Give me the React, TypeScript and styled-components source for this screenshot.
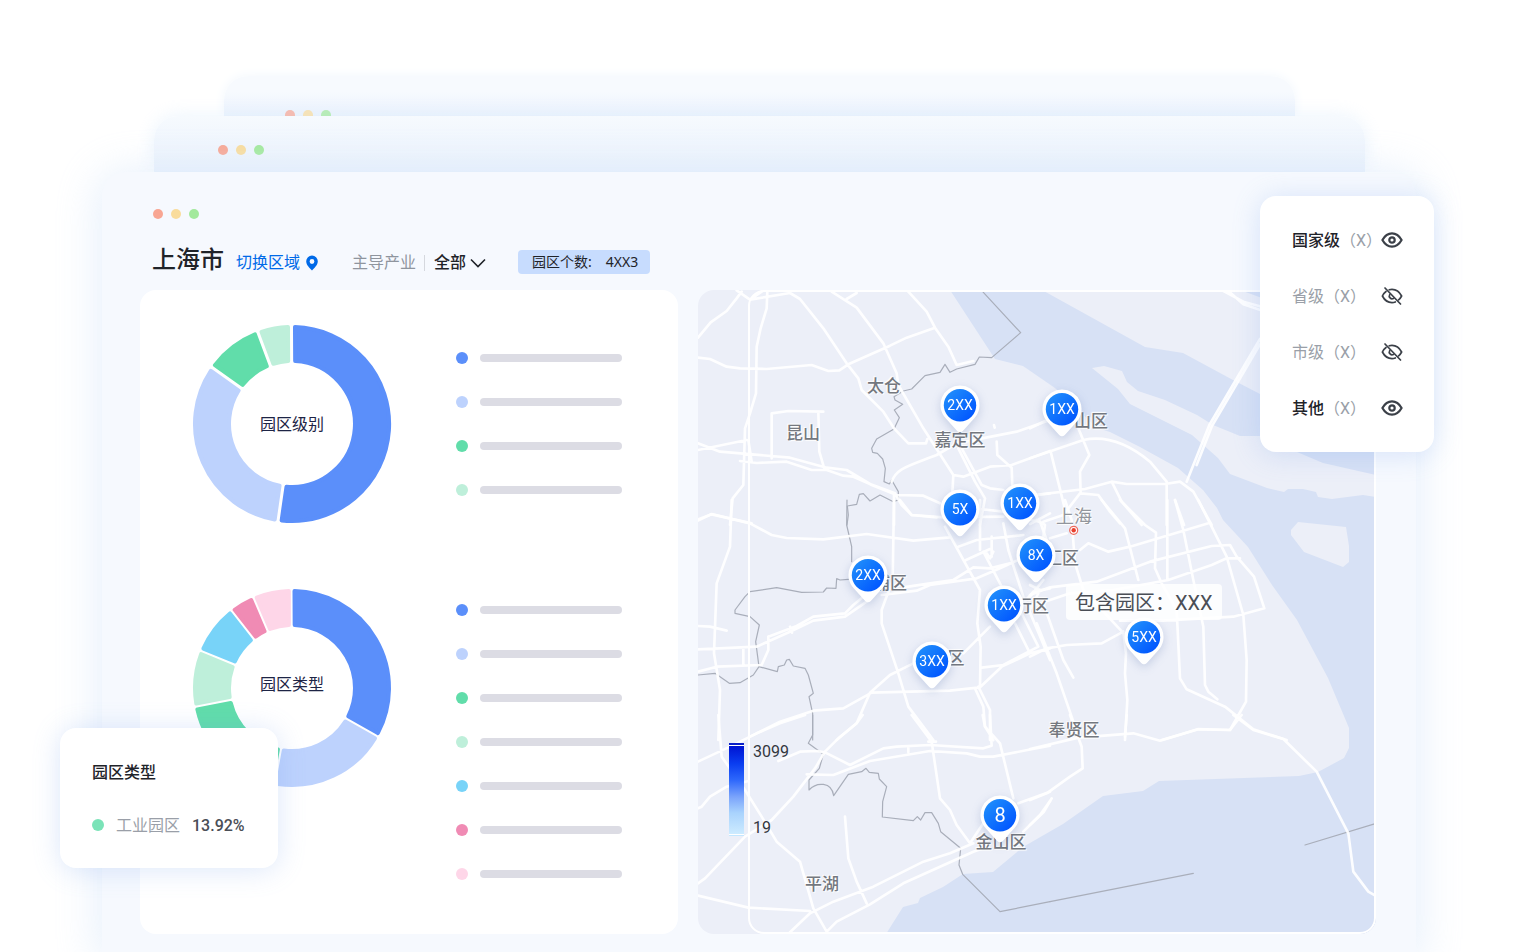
import React, { useState } from "react";
import styled, { createGlobalStyle } from "styled-components";

const GlobalStyle = createGlobalStyle`
  *, *::before, *::after { box-sizing: border-box; }
  body {
    margin: 0;
    background: #fff;
    color: #1f2329;
    font-family: Roboto, "Noto Sans CJK SC", sans-serif;
    font-size: 16px;
    line-height: 24px;
    overflow-x: hidden;
  }
  button, select {
    font: inherit;
    color: inherit;
    background: none;
    border: 0;
    padding: 0;
    cursor: pointer;
  }
`;

/* ---------- Stacked windows ---------- */

const Stage = styled.main`
  position: relative;
  padding: 76px 98px 0 102px;
  overflow: hidden;
`;

const BackWindow = styled.div`
  height: 40px;
  margin: 0 121px 0 122px;
  padding: 34px 0 0 61px;
  overflow: hidden;
  border-radius: 24px 24px 0 0;
  background: linear-gradient(#f7fafe 40%, #eaf2fd);
  box-shadow: 0 0 12px #f1f7fd;
`;

const MiddleWindow = styled.div`
  height: 56px;
  margin: 0 51px 0 52px;
  padding: 29px 0 0 64px;
  border-radius: 24px 24px 0 0;
  background: linear-gradient(#f6fafe, #eff5fd 60%, #e8f1fc);
  box-shadow: 0 0 18px rgba(222, 236, 252, 0.6);
`;

const MainWindow = styled.section`
  position: relative;
  padding: 37px 40px 18px 38px;
  border-radius: 24px 24px 0 0;
  background: #f6f9fe;
  box-shadow: 0 4px 40px 6px rgba(220, 234, 251, 0.65);
`;

const Lights = styled.div<{ $faded?: boolean }>`
  display: flex;
  gap: 8px;
  opacity: ${(p) => (p.$faded ? 0.7 : 1)};
`;

const Light = styled.span<{ $color: string }>`
  width: 10px;
  height: 10px;
  border-radius: 50%;
  background: ${(p) => p.$color};
`;

const WindowLights = ({ faded }: { faded?: boolean }) => (
  <Lights $faded={faded}>
    <Light $color="#f8a693" />
    <Light $color="#f9dc9c" />
    <Light $color="#a2e99c" />
  </Lights>
);

/* ---------- Header ---------- */

const LightsRow = styled.div`
  padding-left: 13px;
`;

const Header = styled.header`
  display: flex;
  align-items: center;
  height: 40px;
  margin: 24px 0 7px;
  padding-left: 12px;
`;

const City = styled.h1`
  margin: 0 12px 6px 0;
  font-size: 24px;
  line-height: 36px;
  font-weight: 500;
`;

const SwitchRegion = styled.button`
  display: flex;
  align-items: center;
  gap: 6px;
  margin-right: 34px;
  color: #006ae8;
`;

const FilterLabel = styled.label`
  color: #8f959e;
  padding-right: 8px;
`;

const FilterField = styled.div`
  display: flex;
  align-items: center;
  margin-right: 32px;
`;

const Divider = styled.span`
  width: 1px;
  height: 16px;
  margin-right: 9px;
  background: #d5d8de;
`;

const Select = styled.select`
  appearance: none;
  font-weight: 500;
  outline: none;
  padding-right: 20px;
  margin-right: -17px;
`;

const Chevron = styled.svg`
  pointer-events: none;
`;

const CountBadge = styled.p`
  display: flex;
  gap: 14px;
  margin: 0 0 2px;
  padding: 0 12px 0 14px;
  border-radius: 4px;
  background: #c7dcfe;
  font-family: "Noto Sans", "Noto Sans CJK SC", sans-serif;
  font-size: 14px;
`;

/* ---------- Chart panel ---------- */

const Columns = styled.div`
  display: grid;
  grid-template-columns: 538fr 678fr;
  gap: 20px;
`;

const ChartPanel = styled.section`
  display: flex;
  flex-direction: column;
  gap: 64px;
  padding: 34px 56px 54px 52px;
  border-radius: 16px;
  background: #fff;
`;

const ChartRow = styled.div<{ $top: number }>`
  display: flex;
  gap: 64px;
  align-items: flex-start;
  & > ul {
    padding-top: ${(p) => p.$top}px;
  }
`;

const DonutBox = styled.figure<{ $lift: number }>`
  display: grid;
  place-items: center;
  flex: none;
  margin: 0;
  & > * {
    grid-area: 1 / 1;
  }
  & > figcaption {
    padding: 2px 0 ${(p) => p.$lift}px;
    color: #1d2445;
  }
`;

const Legend = styled.ul`
  flex: 1;
  display: flex;
  flex-direction: column;
  gap: 32px;
  margin: 0;
  padding: 0;
  list-style: none;
`;

const LegendItem = styled.li`
  display: flex;
  align-items: center;
  gap: 12px;
`;

const Dot = styled.span<{ $color: string }>`
  flex: none;
  width: 12px;
  height: 12px;
  border-radius: 50%;
  background: ${(p) => p.$color};
`;

const Bar = styled.span`
  flex: 1;
  height: 8px;
  border-radius: 4px;
  background: #dcdce4;
`;

type Slice = { color: string; end: number };

const LEVELS: Slice[] = [
  { color: "#5b8ffa", end: 188.2 },
  { color: "#bdd2fd", end: 305.3 },
  { color: "#61ddaa", end: 339.6 },
  { color: "#beefda", end: 359.7 },
];

const TYPES: Slice[] = [
  { color: "#5b8ffa", end: 119.5 },
  { color: "#bdd2fd", end: 190.2 },
  { color: "#61ddaa", end: 259 },
  { color: "#beefda", end: 292.2 },
  { color: "#78d3f8", end: 322 },
  { color: "#f08bb4", end: 336.9 },
  { color: "#fed6e8", end: 359.9 },
];

/* A ring sector inset by the corner radius; a round-joined stroke restores its size. */
function sectorPath(start: number, end: number, halfGap: number) {
  const inset = 2;
  const outer = 99 - inset;
  const inner = 61 + inset;
  const rad = Math.PI / 180;
  const dOuter = Math.asin((halfGap + inset) / outer);
  const dInner = Math.asin((halfGap + inset) / inner);
  const at = (r: number, a: number) =>
    `${(100 + r * Math.sin(a)).toFixed(2)} ${(100 - r * Math.cos(a)).toFixed(2)}`;
  const a0 = start * rad;
  const a1 = end * rad;
  const large = end - start > 180 ? 1 : 0;
  return `M${at(outer, a0 + dOuter)}A${outer} ${outer} 0 ${large} 1 ${at(outer, a1 - dOuter)}L${at(
    inner,
    a1 - dInner
  )}A${inner} ${inner} 0 ${large} 0 ${at(inner, a0 + dInner)}Z`;
}

const Donut = ({ slices, title, gap, lift }: { slices: Slice[]; title: string; gap: number; lift: number }) => (
  <DonutBox $lift={lift}>
    <svg width="200" height="200" viewBox="0 0 200 200" aria-hidden="true">
      {slices.map((s, i) => (
        <path
          key={s.color}
          d={sectorPath(i ? slices[i - 1].end : -0.3, s.end, gap / 2)}
          fill={s.color}
          stroke={s.color}
          strokeWidth="4"
          strokeLinejoin="round"
        />
      ))}
    </svg>
    <figcaption>{title}</figcaption>
  </DonutBox>
);

const Chart = ({ slices, title, gap, lift, top }: { slices: Slice[]; title: string; gap: number; lift: number; top: number }) => (
  <ChartRow $top={top}>
    <Donut slices={slices} title={title} gap={gap} lift={lift} />
    <Legend>
      {slices.map((s) => (
        <LegendItem key={s.color}>
          <Dot $color={s.color} />
          <Bar />
        </LegendItem>
      ))}
    </Legend>
  </ChartRow>
);

/* ---------- Map ---------- */

const MAP = { x: 698, y: 290, w: 678, h: 644 };
const left = (x: number) => `${((x - MAP.x) / MAP.w) * 100}%`;
const top = (y: number) => `${((y - MAP.y) / MAP.h) * 100}%`;

const MapPanel = styled.section`
  position: relative;
  overflow: hidden;
  border-radius: 16px;
  background: #eceff8;
`;

const MapArt = styled.svg`
  position: absolute;
  inset: 0;
  width: 100%;
  height: 100%;
`;

const Place = styled.span<{ $x: number; $y: number; $city?: boolean }>`
  position: absolute;
  left: ${(p) => left(p.$x)};
  top: ${(p) => top(p.$y)};
  transform: translate(-50%, -50%);
  white-space: nowrap;
  font-size: ${(p) => (p.$city ? 18 : 17)}px;
  font-weight: ${(p) => (p.$city ? 400 : 500)};
  color: ${(p) => (p.$city ? "#92969d" : "#74787f")};
  text-shadow: 0 0 2px #fff, 1px 1px 1px #fff, -1px -1px 1px #fff;
`;

const Pin = styled.button<{ $x: number; $y: number; $large?: boolean }>`
  position: absolute;
  left: ${(p) => left(p.$x)};
  top: ${(p) => top(p.$y)};
  width: 40px;
  height: 48px;
  margin: -20px 0 0 -20px;
  color: #fff;
  font-size: ${(p) => (p.$large ? 20 : 14)}px;
  filter: drop-shadow(0 3px 5px rgba(60, 90, 160, 0.22));
  & > svg {
    position: absolute;
    inset: 0;
  }
  & > span {
    position: relative;
    display: block;
    height: 48px;
    line-height: 40px;
  }
`;

const Tooltip = styled.div`
  position: absolute;
  left: ${left(1066)};
  top: ${top(584)};
  display: flex;
  padding: 2px 9px 0;
  border-radius: 4px;
  background: rgba(255, 255, 255, 0.84);
  color: #4a4e56;
  font-size: 20px;
  line-height: 34px;
  white-space: nowrap;
`;

const Scale = styled.div`
  position: absolute;
  left: ${left(729)};
  top: ${top(743)};
  display: flex;
  gap: 9px;
  height: 93px;
`;

const ScaleBar = styled.div`
  width: 15px;
  border-top: 2px solid #0a1fc8;
  border-bottom: 1px solid #c4e7ff;
  &::before {
    content: "";
    display: block;
    height: 100%;
    border: solid #fff;
    border-width: 1px 0;
    background: linear-gradient(#0014d2, #0a3df0 20%, #2c66fb 38%, #7ba4fb 58%, #a9d3fd 76%, #cdebff);
  }
`;

const ScaleLabels = styled.div`
  display: flex;
  flex-direction: column;
  justify-content: space-between;
  padding-top: 1px;
  line-height: 16px;
  color: #33373e;
`;

const PLACES: [string, number, number][] = [
  ["太仓", 884, 386],
  ["昆山", 803, 433],
  ["嘉定区", 960, 440],
  ["山区", 1091, 421],
  ["浦区", 890, 583],
  ["汇区", 1062, 558],
  ["行区", 1032, 606],
  ["区", 956, 658],
  ["奉贤区", 1074, 730],
  ["金山区", 1001, 842],
  ["平湖", 822, 884],
];

const PINS: [string, number, number][] = [
  ["2XX", 960, 405],
  ["1XX", 1062, 409],
  ["5X", 960, 509],
  ["1XX", 1020, 503],
  ["8X", 1036, 555],
  ["2XX", 868, 575],
  ["1XX", 1004, 605],
  ["3XX", 932, 661],
  ["5XX", 1144, 637],
  ["8", 1000, 815],
];

/* The map is drawn in six tiles, each with its own origin and three units to the pixel. */
type Tile = { x: number; y: number; roads: string; borders?: string };

const TILES: Tile[] = [
  {
    x: 690,
    y: 285,
    roads:
      "M24 158L62 112L110 78L140 40L155 20M140 16L180 44L300 24L330 42L400 130L470 235L505 280L515 315L580 380L612 430L655 475H708L712 462" +
      "M180 44L215 20M232 20L230 70L212 130L200 185L198 325L180 385L165 430L160 600L128 640L120 720" +
      "M24 218L60 222L110 245L150 250L230 252L365 240L415 258L448 256L475 238L600 182L650 158L735 128" +
      "M655 20L710 80L735 128L775 185L800 240L850 228M425 20L500 68L580 175L620 265L625 300L700 430L790 570L787 625" +
      "M470 42L500 24M245 520V385L295 378L400 380M385 380L388 500L402 548" +
      "M24 475L90 500L300 518L410 548L470 555L545 600L620 630L700 632L750 655M24 495L170 465M175 465L185 530" +
      "M150 528L200 534L290 530L365 555L410 555L460 572L490 575L540 597L615 625L635 660L665 690L740 697" +
      "M605 590C620 550 650 545 740 510L800 475L980 440L1080 405M805 490L855 590L885 640L870 720M815 490L875 600L900 610L940 615" +
      "M790 570L820 575L900 545L965 540L1080 498M920 470L922 510L965 548L967 600M24 703L65 688L185 715M612 630V720" +
      "M1040 630L1080 625M870 672L940 680M912 420L914 428",
    borders:
      "M878 20L992 143L905 218L868 216L855 238L800 252L780 262L765 238L750 262L705 272L665 312L640 318L612 335L615 345L638 358L613 375L628 398L612 432L560 462L545 490L548 502L562 505L578 522L586 550L582 590L598 597L605 585L625 620V645L610 650L570 630L540 648L520 626L508 628L500 658L472 663L475 690L471 720",
  },
  {
    x: 1030,
    y: 285,
    roads:
      "M0 430L45 408M0 520L160 465C230 450 300 480 360 530L410 590V720M145 430L178 510L150 560L152 625L205 630L240 680L270 715" +
      "M62 500L103 665M0 632L165 612L245 590L290 597H405L450 590L490 620L545 720M245 590L275 650L335 720M435 645L462 720" +
      "M150 625L100 690L40 710M470 590L538 420L690 162M500 540L545 425L690 178M575 15L640 50L720 72M592 15L640 58L720 85",
  },
  {
    x: 690,
    y: 500,
    roads:
      "M24 62L65 42L180 70L245 105L290 114L400 118L530 102L670 122L780 112M125 0L120 140L80 250L72 460L90 570L85 720" +
      "M612 0L608 240L575 330V370L625 520L655 620L730 720M24 378L60 380L110 392" +
      "M24 448L200 440L300 395L370 362L465 350L530 305M235 410L320 378L370 350L465 340L490 315L520 290" +
      "M24 515L80 500L215 495L235 450V410M160 445V495M300 380L306 398" +
      "M575 285L680 272L720 255L860 235L930 205L985 180M640 262L720 250L790 240L850 202L900 205L960 190" +
      "M765 80L870 270L862 370L872 440L870 562M180 710L270 665L370 632L460 625L545 578L780 572L870 562L935 500L1020 460L1080 445" +
      "M440 720L500 670L540 578L600 525L670 490M820 460L900 380M940 70L955 150L1000 290L1080 480" +
      "M975 370L1020 460M990 330L1045 440L940 495L875 503M805 140L860 120L1000 105M828 180L905 145M905 110V170M880 155L935 260" +
      "M870 0V150M855 565L880 620L885 680L910 720M865 560L900 630V720M1080 265L1030 275L1000 310M1060 240L1020 290" +
      "M665 45L760 52L940 50M630 0L665 45M1040 60L1065 75L1060 110M1080 40L1020 72M890 160L900 175L910 155",
    borders:
      "M471 0L470 75L485 140L485 185M475 238L450 240L440 236L438 265L410 264L400 276L335 277L260 263L180 275L165 290L135 330V340L180 350L208 375L197 425L207 500L262 515L265 500L283 495L290 480L298 478L310 498L345 505L355 525L370 580L357 590L368 640V720M24 525L75 520L118 550L150 548L190 525L207 500",
  },
  {
    x: 1030,
    y: 500,
    roads:
      "M0 285L60 262L200 245L360 185L545 138L600 135L620 170L672 230L703 325L610 350L400 362H270" +
      "M0 320L120 280L250 270L415 240L545 195L590 175H630M150 150L175 130L235 155L300 140L540 68" +
      "M105 0L125 60L135 190L160 270L290 410M280 395L288 460L285 520L292 600L285 720" +
      "M215 0L285 85L325 240M270 0L345 75L378 98L375 205L395 250L440 330L450 535L470 568L585 620L670 688L770 720" +
      "M412 0V240M435 0L460 90L490 240L520 380L525 555L535 575L562 598" +
      "M505 0L590 170L640 345L650 480L648 605L600 690L505 688L395 720M0 470L50 445L110 435L215 430L280 395" +
      "M20 370L80 520L130 665M40 310L100 480L130 533M60 115L110 100M0 60L30 65L50 120M0 255L30 270L0 330",
  },
  {
    x: 690,
    y: 715,
    roads:
      "M24 140L120 95L200 55L270 25L345 0M85 0L95 125L165 225L215 305L260 380L330 440L370 580L410 650" +
      "M24 280L35 275L60 245L110 215L175 198M24 505L45 490L165 365L245 315L310 245L375 160L405 110L445 70L500 25L518 0" +
      "M265 138L330 110L380 108L405 112L480 150L580 100L620 95L720 90L880 100L905 92L900 0" +
      "M350 178L430 180L540 138L720 108L830 115L870 125L910 125L1080 92M665 0L725 80L750 250L780 285L800 330L840 385L890 310" +
      "M878 0L885 35L930 85L970 250M24 542L175 578L360 588M300 652L360 595L430 560L550 515L700 440L780 415L850 385" +
      "M410 650L440 620L540 568L640 505L850 410L880 400M465 305L475 430L500 500L530 565M1000 350L1050 300L1080 258" +
      "M985 265L1080 230M655 95V112M715 80H738",
    borders:
      "M368 0V60L355 85L400 118L388 160L357 195V225C380 200 425 200 431 242L475 178L515 170L528 160L538 172L565 175L568 192L590 215L578 260L577 306L670 317L682 305L692 315L705 293H725L745 325L752 350L812 400L807 450L818 478L930 590L1080 560",
  },
  {
    x: 1030,
    y: 715,
    roads:
      "M0 102L145 68L310 55L390 77L440 62L505 42L600 45L635 0M610 0L670 45L760 72L860 170L955 355L970 470L1015 530L1036 542" +
      "M120 0L155 95L158 160L120 185L50 235L0 255M290 0L285 65M65 250L42 290L0 330",
    borders: "M60 560L490 475M825 390L1036 326",
  },
];

const WATER =
  "M950 290L995 359L1023 366L1055 388L1097 428L1110 432L1140 447L1178 468L1203 490L1217 508L1223 520L1248 547L1272 585L1297 620L1328 678L1349 728V748L1344 758L1318 772L1299 776L1159 781L1143 791L1103 796L1063 824L1023 847L993 872L963 874L943 887L920 898L918 903L903 907L886 934H1376V290Z";
const ISLANDS =
  "M1042 290L1145 347L1183 353L1233 380L1260 394L1376 440V290Z" +
  "M1092 368L1104 366L1122 371L1127 382L1138 391L1165 400L1197 415L1213 425L1240 436H1260L1297 452L1323 463L1376 475V497L1363 495L1332 499L1318 497L1316 492L1303 489H1288L1284 492L1267 488L1230 474L1218 458L1192 435L1130 404L1118 389Z" +
  "M1298 522L1291 530V535L1304 552L1343 567L1349 562V546L1346 527Z";

const MapDrawing = () => (
  <MapArt viewBox={`${MAP.x} ${MAP.y} ${MAP.w} ${MAP.h}`} preserveAspectRatio="none" aria-hidden="true">
    <path d={WATER} fill="#d7e1f5" />
    <path d={ISLANDS} fill="#eceff8" />
    <path d="M1240 290L1262 298V290Z" fill="#d7e1f5" />
    {TILES.map((t) => (
      <g
        key={`${t.x}-${t.y}`}
        transform={`translate(${t.x} ${t.y}) scale(0.33333)`}
        fill="none"
        strokeLinecap="round"
        strokeLinejoin="round"
      >
        {t.borders && <path d={t.borders} stroke="#a9aeba" strokeWidth="3.6" />}
        <path d={t.roads} stroke="#fff" strokeOpacity="0.92" strokeWidth="8" />
      </g>
    ))}
    <rect x="749" y="291" width="626" height="642" rx="15" fill="none" stroke="#fff" strokeWidth="2" />
    <circle cx="1073.700" cy="530.300" r="4" fill="#fff" stroke="#ee6a5c" strokeWidth="1.200" />
    <circle cx="1073.700" cy="530.300" r="2.200" fill="#e8402f" />
  </MapArt>
);

/* ---------- Floating cards ---------- */

const FloatingCard = styled.aside`
  position: absolute;
  border-radius: 16px;
  background: #fff;
  box-shadow: 0 2px 28px rgba(110, 155, 235, 0.24);
`;

const LayerCard = styled(FloatingCard)`
  top: 196px;
  right: 80px;
  width: 174px;
  padding: 32px 31px 32px 32px;
  display: flex;
  flex-direction: column;
  gap: 32px;
`;

const LayerRow = styled.div<{ $on: boolean }>`
  display: flex;
  align-items: center;
  justify-content: space-between;
  height: 24px;
  white-space: nowrap;
  color: #9a9fa8;
  & > span {
    padding-top: 2px;
  }
  & strong {
    font-weight: ${(p) => (p.$on ? 500 : 400)};
    color: ${(p) => (p.$on ? "#1f2329" : "#9a9fa8")};
  }
`;

const EyeButton = styled.button`
  display: flex;
  flex: none;
  margin-left: -2px;
  color: #3b4048;
`;

const TypeCard = styled(FloatingCard)`
  top: 728px;
  left: 60px;
  padding: 33px 33px 31px 32px;
`;

const TypeTitle = styled.h2`
  margin: 0 0 27px;
  font-size: 16px;
  line-height: 24px;
  font-weight: 500;
`;

const TypeRow = styled.div`
  display: flex;
  align-items: center;
  gap: 12px;
  height: 25px;
  color: #9a9fa8;
  & > strong,
  & > b {
    padding-top: 2px;
  }
  & > b {
    font-weight: 400;
  }
  & > strong {
    font-weight: 500;
    color: #4a4e56;
  }
`;

const EyeIcon = ({ open }: { open: boolean }) => (
  <svg width="22" height="18" viewBox="0 0 22 18" fill="none" stroke="currentColor" strokeLinecap="round" aria-hidden="true">
    {open ? (
      <>
        <path d="M1.400 9C4 4.400 7.300 2.400 11 2.400S18 4.400 20.600 9C18 13.600 14.700 15.600 11 15.600S4 13.600 1.400 9Z" strokeWidth="2.200" strokeLinejoin="round" />
        <circle cx="11" cy="9" r="2.700" strokeWidth="2.200" />
      </>
    ) : (
      <>
        <path d="M5 4.500C3.500 5.600 2.300 7.100 1.400 9C3.700 13.500 7 15.600 11 15.600C12.200 15.600 13.300 15.400 14.300 15" strokeWidth="1.700" />
        <path d="M8.200 2.800C9.100 2.500 10 2.400 11 2.400C15 2.400 18.300 4.500 20.600 9C19.800 10.600 18.800 11.900 17.600 12.900" strokeWidth="1.700" />
        <path d="M8.700 7.600A2.800 2.800 0 0 0 12.400 11.500" strokeWidth="1.700" />
        <path d="M4 1L19.500 17" strokeWidth="1.700" />
      </>
    )}
  </svg>
);

const LAYERS = [
  { name: "国家级", on: true },
  { name: "省级", on: false },
  { name: "市级", on: false },
  { name: "其他", on: true },
];

const Layers = () => {
  const [layers, setLayers] = useState(LAYERS);
  const toggle = (name: string) => setLayers((all) => all.map((l) => (l.name === name ? { ...l, on: !l.on } : l)));
  return (
    <LayerCard>
      {layers.map((l) => (
        <LayerRow key={l.name} $on={l.on}>
          <span>
            <strong>{l.name}</strong>（X）
          </span>
          <EyeButton type="button" aria-label={l.name} aria-pressed={l.on} onClick={() => toggle(l.name)}>
            <EyeIcon open={l.on} />
          </EyeButton>
        </LayerRow>
      ))}
    </LayerCard>
  );
};

export default function App() {
  return (
    <>
      <GlobalStyle />
      <Stage>
        <BackWindow>
          <WindowLights faded />
        </BackWindow>
        <MiddleWindow>
          <WindowLights />
        </MiddleWindow>
        <MainWindow>
          <LightsRow>
            <WindowLights />
          </LightsRow>
          <Header>
            <City>上海市</City>
            <SwitchRegion type="button">
              切换区域
              <svg width="12" height="16" viewBox="0 0 12 16" aria-hidden="true">
                <path
                  d="M6 0.500A5.800 5.800 0 0 0 0.200 6.300C0.200 10 3.600 13 6 15.500C8.400 13 11.800 10 11.800 6.300A5.800 5.800 0 0 0 6 0.500ZM6 4.100A2.400 2.400 0 1 1 6 8.900A2.400 2.400 0 1 1 6 4.100Z"
                  fill="currentColor"
                  fillRule="evenodd"
                />
              </svg>
            </SwitchRegion>
            <FilterField>
              <FilterLabel htmlFor="industry">主导产业</FilterLabel>
              <Divider />
              <Select id="industry" defaultValue="all">
                <option value="all">全部</option>
              </Select>
              <Chevron width="16" height="10" viewBox="0 0 16 10" fill="none" aria-hidden="true">
                <path d="M1 1.500L8 8.500L15 1.500" stroke="#1f2329" strokeWidth="1.600" />
              </Chevron>
            </FilterField>
            <CountBadge>
              <span>园区个数:</span>
              <span>4XX3</span>
            </CountBadge>
          </Header>
          <Columns>
            <ChartPanel>
              <Chart slices={LEVELS} title="园区级别" gap={3} lift={0} top={28} />
              <Chart slices={TYPES} title="园区类型" gap={2} lift={8} top={16} />
            </ChartPanel>
            <MapPanel>
              <MapDrawing />
              {PLACES.map(([name, x, y]) => (
                <Place key={name} $x={x} $y={y}>
                  {name}
                </Place>
              ))}
              <Place $x={1074} $y={517} $city>
                上海
              </Place>
              {PINS.map(([count, x, y]) => (
                <Pin key={`${x}-${y}`} type="button" $x={x} $y={y} $large={count.length === 1}>
                  <svg width="40" height="48" viewBox="0 0 40 48" aria-hidden="true">
                    <defs>
                      <linearGradient id={`pin-${x}-${y}`} x1="0" y1="0" x2="1" y2="1">
                        <stop offset="0.100" stopColor="#1f8dfb" />
                        <stop offset="0.900" stopColor="#0055ff" />
                      </linearGradient>
                    </defs>
                    <path
                      d="M20 0.500A19.500 19.500 0 0 0 5.900 33.500L17.200 46Q20 48.500 22.800 46L34.100 33.500A19.500 19.500 0 0 0 20 0.500Z"
                      fill="#fff"
                    />
                    <circle cx="20" cy="20.300" r="16.200" fill={`url(#pin-${x}-${y})`} />
                  </svg>
                  <span>{count}</span>
                </Pin>
              ))}
              <Tooltip>
                <span>包含园区：</span>
                <span>XXX</span>
              </Tooltip>
              <Scale>
                <ScaleBar />
                <ScaleLabels>
                  <span>3099</span>
                  <span>19</span>
                </ScaleLabels>
              </Scale>
            </MapPanel>
          </Columns>
        </MainWindow>
        <Layers />
        <TypeCard>
          <TypeTitle>园区类型</TypeTitle>
          <TypeRow>
            <Dot $color="#7be3b8" />
            <b>工业园区</b>
            <strong>13.92%</strong>
          </TypeRow>
        </TypeCard>
      </Stage>
    </>
  );
}
